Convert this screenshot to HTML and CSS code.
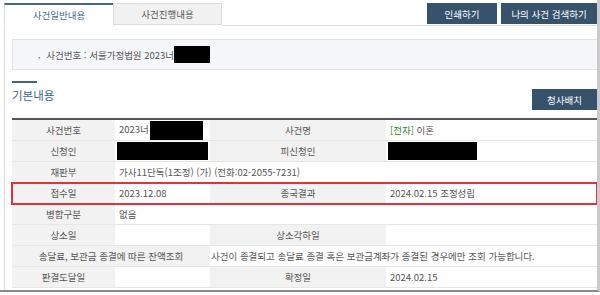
FILE: index.html
```html
<!DOCTYPE html>
<html lang="ko">
<head>
  <meta charset="UTF-8">
  <title>사건일반내용</title>
  <link rel="stylesheet" href="styles.css">
</head>
<body>

<div class="wrap">
  <div class="topbar">
    <div class="tab active">사건일반내용</div>
    <div class="tab">사건진행내용</div>
    <div class="actions">
      <button class="btn">인쇄하기</button>
      <button class="btn wide">나의 사건 검색하기</button>
    </div>
  </div>

  <div class="content">
    <div class="casebox">
      <span class="dot">,</span> 사건번호 : 서울가정법원 2023너<span class="mask m-case"></span>
    </div>

    <div class="section-head">
      <h2 class="title">기본내용</h2>
      <button class="btn small">청사배치</button>
    </div>

    <table class="info">
      <colgroup>
        <col class="c1"><col class="c2"><col class="c3"><col class="c4">
      </colgroup>
      <tr>
        <th>사건번호</th>
        <td>2023너<span class="mask m-no"></span></td>
        <th>사건명</th>
        <td><span class="green">[전자]</span> 이혼</td>
      </tr>
      <tr>
        <th>신청인</th>
        <td><span class="mask m-p1"></span></td>
        <th>피신청인</th>
        <td><span class="mask m-p2"></span></td>
      </tr>
      <tr>
        <th>재판부</th>
        <td colspan="3">가사11단독(1조정) (가) (전화:02-2055-7231)</td>
      </tr>
      <tr class="hl">
        <th>접수일</th>
        <td>2023.12.08</td>
        <th>종국결과</th>
        <td>2024.02.15 조정성립</td>
      </tr>
      <tr>
        <th>병합구분</th>
        <td colspan="3">없음</td>
      </tr>
      <tr>
        <th>상소일</th>
        <td></td>
        <th>상소각하일</th>
        <td></td>
      </tr>
      <tr>
        <th colspan="2">송달료, 보관금 종결에 따른 잔액조회</th>
        <td colspan="2" class="tight">사건이 종결되고 송달료 종결 혹은 보관금계좌가 종결된 경우에만 조회 가능합니다.</td>
      </tr>
      <tr>
        <th>판결도달일</th>
        <td></td>
        <th>확정일</th>
        <td>2024.02.15</td>
      </tr>
    </table>
  </div>
</div>

</body>
</html>
```

FILE: styles.css
```css
body {
  margin: 0;
  font-family: "Noto Sans CJK KR", "Noto Sans", sans-serif;
  font-size: 9.5px;
  color: #555;
  background-color: #fff;
}
.wrap {
  width: 600px;
  height: 292px;
  box-sizing: border-box;
  border-right: 3px solid #cbcbcb;
  border-bottom: 2px solid #8a8a8a;
  overflow: hidden;
}
.topbar {
  display: flex;
  padding: 3px 0 0 4px;
}
.tab {
  width: 109px;
  height: 22px;
  box-sizing: border-box;
  display: flex;
  align-items: center;
  justify-content: center;
  background-color: #f1f1f1;
  border: 1px solid #dcdcdc;
  color: #555;
}
.tab.active {
  background-color: #fff;
  border: none;
  border-top: 2px solid #45637e;
  border-left: 1px solid #dcdcdc;
  color: #3d6994;
}
.actions {
  flex: 1;
  display: flex;
  justify-content: flex-end;
  gap: 4px;
  height: 23px;
  box-sizing: border-box;
  border-bottom: 1px solid #dcdcdc;
}
.btn {
  height: 21px;
  width: 70px;
  padding: 0;
  border: none;
  background-color: #37536b;
  color: #fff;
  font-family: inherit;
  font-size: 9.5px;
}
.btn.wide {
  width: 96px;
}
.btn.small {
  width: 65px;
  align-self: flex-end;
}
.content {
  margin-left: 4px;
  border-left: 1px solid #dcdcdc;
  padding: 13px 0 0 7px;
  height: 300px;
}
.casebox {
  height: 31px;
  box-sizing: border-box;
  display: flex;
  align-items: center;
  padding-left: 25px;
  background-color: #f5f6fa;
  border: 1px solid #e0e2e8;
  border-right: none;
  color: #555;
}
.dot {
  font-size: 8px;
  margin-right: 6px;
}
.mask {
  display: inline-block;
  background-color: #000;
  vertical-align: middle;
}
.m-case {
  width: 36px;
  height: 17px;
}
.m-no {
  width: 53px;
  height: 19px;
  margin-left: 1px;
}
.m-p1 {
  width: 91px;
  height: 18px;
  margin-left: -2px;
}
.m-p2 {
  width: 89px;
  height: 18px;
  margin-left: -2px;
}
.section-head {
  display: flex;
  justify-content: space-between;
  height: 29px;
  margin-top: 11px;
}
.title {
  margin: 0;
  font-size: 11.5px;
  font-weight: normal;
  color: #3a6690;
  line-height: 14px;
}
.title::before {
  content: "";
  display: block;
  width: 25px;
  height: 2px;
  background-color: #45637e;
  margin-bottom: 5px;
}
.info {
  margin-top: 8px;
  width: 585px;
  border-collapse: collapse;
  border-top: 2px solid #555;
  table-layout: fixed;
}
.c1 { width: 103px; }
.c2 { width: 95px; }
.c3 { width: 176px; }
.c4 { width: 211px; }
.info th, .info td {
  height: 20px;
  padding: 0 0 0 4px;
  border-bottom: 1px solid #e6e6e6;
  font-weight: normal;
  white-space: nowrap;
  overflow: hidden;
}
.info th {
  background-color: #f2f2f2;
  text-align: center;
  color: #555;
  padding: 0;
}
.info td {
  text-align: left;
}
.info td.tight {
  padding-left: 1px;
}
.info tr.hl {
  outline: 2px solid #e0323f;
  outline-offset: -1px;
}
.green {
  color: #2e8b2e;
}
```
